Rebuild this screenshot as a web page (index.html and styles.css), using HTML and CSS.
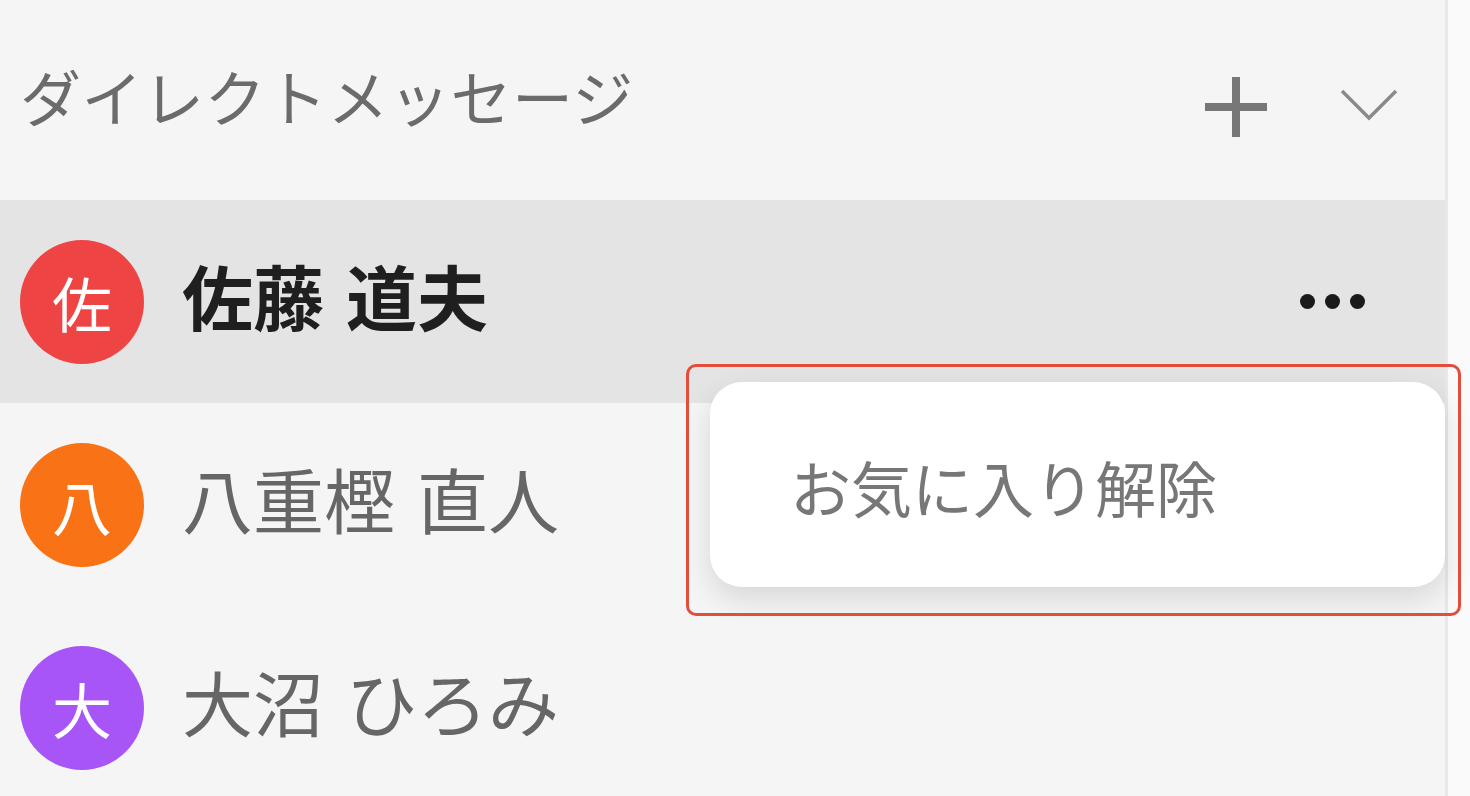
FILE: index.html
```html
<!DOCTYPE html>
<html lang="ja">
<head>
  <meta charset="UTF-8" />
  <title>ダイレクトメッセージ</title>
  <link rel="stylesheet" href="styles.css">
</head>
<body>
  <div class="sidebar">
    <div class="section-header">
      <span class="section-title">ダイレクトメッセージ</span>
      <div class="header-actions">
        <svg class="icon-plus" width="66" height="64" viewBox="0 0 66 64">
          <path d="M33 2 V62 M2 32 H64" stroke="#777" stroke-width="8" fill="none"/>
        </svg>
        <svg class="icon-chevron" width="60" height="36" viewBox="0 0 60 36">
          <path d="M3 4 L30 31 L57 4" stroke="#8a8a8a" stroke-width="3.5" fill="none"/>
        </svg>
      </div>
    </div>

    <ul class="dm-list">
      <li class="dm-row active">
        <span class="avatar red">佐</span>
        <span class="dm-name">佐藤 道夫</span>
        <span class="more"><i></i><i></i><i></i></span>
      </li>
      <li class="dm-row">
        <span class="avatar orange">八</span>
        <span class="dm-name">八重樫 直人</span>
      </li>
      <li class="dm-row">
        <span class="avatar purple">大</span>
        <span class="dm-name">大沼 ひろみ</span>
      </li>
    </ul>

    <div class="menu">
      <div class="menu-item">お気に入り解除</div>
    </div>
    <div class="highlight-box"></div>
  </div>
</body>
</html>
```

FILE: styles.css
```css
body {
  margin: 0;
  background: #fafafa;
  font-family: "Noto Sans CJK JP", "Noto Sans", sans-serif;
}
.sidebar {
  position: relative;
  width: 1445px;
  height: 796px;
  background: #f5f5f5;
  border-right: 3px solid #e8e8e8;
  overflow: visible;
}
.section-header {
  height: 200px;
  display: flex;
  align-items: center;
  justify-content: space-between;
  padding: 0 46px 0 20px;
  box-sizing: border-box;
}
.section-title {
  font-size: 61px;
  color: #6b6b6b;
  margin-top: -10px;
  letter-spacing: 0.5px;
}
.header-actions {
  display: flex;
  align-items: center;
  gap: 70px;
  margin-top: 14px;
}
.icon-chevron {
  margin-top: -4px;
}
.dm-list {
  list-style: none;
  margin: 0;
  padding: 0;
}
.dm-row {
  height: 203px;
  display: flex;
  align-items: center;
  padding-left: 20px;
  padding-right: 80px;
  box-sizing: border-box;
}
.dm-row.active {
  background: #e4e4e4;
}
.avatar {
  width: 124px;
  height: 124px;
  border-radius: 50%;
  color: #fff;
  font-size: 60px;
  display: flex;
  align-items: center;
  justify-content: center;
  flex-shrink: 0;
}
.avatar.red { background: #ef4444; }
.avatar.orange { background: #f97316; }
.avatar.purple { background: #a855f7; }
.dm-name {
  margin-left: 38px;
  margin-bottom: 16px;
  font-size: 71px;
  color: #666;
  flex: 1;
  word-spacing: 6px;
}
.dm-row.active .dm-name {
  font-weight: bold;
  color: #1f1f1f;
}
.more {
  display: flex;
  gap: 10px;
}
.more i {
  width: 15px;
  height: 15px;
  border-radius: 50%;
  background: #1a1a1a;
}
.menu {
  position: absolute;
  left: 710px;
  top: 382px;
  width: 735px;
  height: 205px;
  background: #fff;
  border-radius: 32px;
  box-shadow: 0 12px 30px rgba(0,0,0,0.12);
  display: flex;
  align-items: center;
  box-sizing: border-box;
  padding-left: 80px;
}
.menu-item {
  font-size: 61px;
  color: #777;
  margin-top: 4px;
}
.highlight-box {
  position: absolute;
  left: 686px;
  top: 364px;
  width: 775px;
  height: 252px;
  border: 3px solid #e24e3b;
  border-radius: 10px;
  box-sizing: border-box;
}
```
